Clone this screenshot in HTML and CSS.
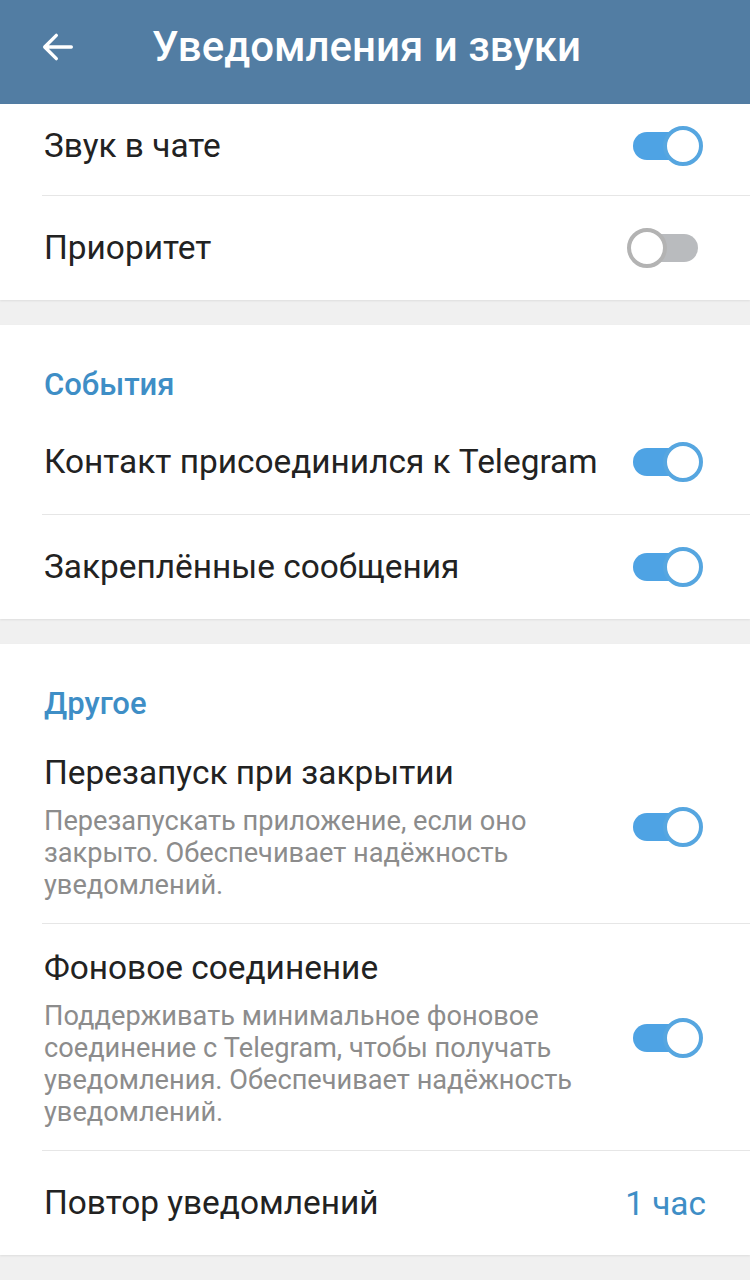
FILE: index.html
```html
<!DOCTYPE html>
<html lang="ru">
<head>
  <meta charset="UTF-8">
  <meta name="viewport" content="width=device-width, initial-scale=1">
  <title>Уведомления и звуки</title>
  <link rel="stylesheet" href="styles.css">
</head>
<body>

<header class="toolbar">
  <button class="back" aria-label="Назад">
    <svg viewBox="0 0 24 24" width="40" height="40">
      <path d="M20 12H4.5M11 5l-7 7 7 7" fill="none" stroke="#fff" stroke-width="2" stroke-linecap="round" stroke-linejoin="round"/>
    </svg>
  </button>
  <h1 class="title">Уведомления и звуки</h1>
</header>

<section class="group">
  <div class="row row-cut">
    <span class="label">Звук в чате</span>
    <span class="switch on"><span class="thumb"></span></span>
  </div>
  <div class="row">
    <span class="label">Приоритет</span>
    <span class="switch"><span class="thumb"></span></span>
  </div>
</section>

<section class="group">
  <h2 class="group-title">События</h2>
  <div class="row">
    <span class="label">Контакт присоединился к Telegram</span>
    <span class="switch on"><span class="thumb"></span></span>
  </div>
  <div class="row">
    <span class="label">Закреплённые сообщения</span>
    <span class="switch on"><span class="thumb"></span></span>
  </div>
</section>

<section class="group">
  <h2 class="group-title">Другое</h2>
  <div class="row row-tall">
    <div class="text">
      <span class="label">Перезапуск при закрытии</span>
      <span class="hint">Перезапускать приложение, если оно закрыто. Обеспечивает надёжность уведомлений.</span>
    </div>
    <span class="switch on"><span class="thumb"></span></span>
  </div>
  <div class="row row-tall">
    <div class="text">
      <span class="label">Фоновое соединение</span>
      <span class="hint">Поддерживать минимальное фоновое соединение с Telegram, чтобы получать уведомления. Обеспечивает надёжность уведомлений.</span>
    </div>
    <span class="switch on"><span class="thumb"></span></span>
  </div>
  <div class="row">
    <span class="label">Повтор уведомлений</span>
    <span class="value">1 час</span>
  </div>
</section>

</body>
</html>
```

FILE: styles.css
```css
body {
  margin: 0;
  background: #f0f0f0;
  font-family: Roboto, "Noto Sans", sans-serif;
  color: #222222;
}

.toolbar {
  height: 104px;
  background: #527da3;
  display: flex;
  align-items: center;
  padding: 0 0 10px 38px;
  box-sizing: border-box;
}

.back {
  background: none;
  border: none;
  padding: 0;
  width: 40px;
  height: 40px;
  display: flex;
}

.title {
  margin: 0 0 0 74px;
  color: #ffffff;
  font-size: 42px;
  line-height: 48px;
  font-weight: 500;
}

.group {
  background: #ffffff;
  margin-bottom: 25px;
  box-shadow: 0 1px 2px rgba(0, 0, 0, 0.08);
}

.group-title {
  margin: 0;
  padding: 45px 44px 10px;
  font-size: 31px;
  line-height: 30px;
  font-weight: 500;
  color: #3e8ec6;
}

.row {
  height: 104px;
  margin-left: 42px;
  padding: 0 46px 0 2px;
  display: flex;
  align-items: center;
  justify-content: space-between;
  border-bottom: 1px solid #e6e6e6;
}

.row:last-child {
  border-bottom: none;
}

.row-cut {
  height: 92px;
  padding-bottom: 8px;
  box-sizing: border-box;
}

.row-tall {
  height: auto;
  padding-top: 24px;
  padding-bottom: 22px;
}

.label {
  font-size: 33.4px;
  line-height: 40px;
}

.text {
  display: flex;
  flex-direction: column;
  gap: 12px;
  max-width: 560px;
}

.hint {
  font-size: 27.2px;
  line-height: 32px;
  color: #8c8c8c;
}

.value {
  font-size: 33.4px;
  color: #3e8ec6;
  margin-right: -2px;
}

.switch {
  position: relative;
  width: 76px;
  height: 40px;
  flex-shrink: 0;
  margin-right: 1px;
}

.switch::before {
  content: "";
  position: absolute;
  left: 6px;
  right: 5px;
  top: 6px;
  height: 28px;
  border-radius: 14px;
  background: #b9bbbe;
}

.switch .thumb {
  position: absolute;
  left: 0;
  top: 0;
  width: 40px;
  height: 40px;
  box-sizing: border-box;
  border-radius: 50%;
  background: #ffffff;
  border: 4px solid #b3b3b3;
}

.switch.on::before {
  background: #4ea3e4;
}

.switch.on .thumb {
  left: auto;
  right: 0;
  border-color: #56a6e0;
}
```
